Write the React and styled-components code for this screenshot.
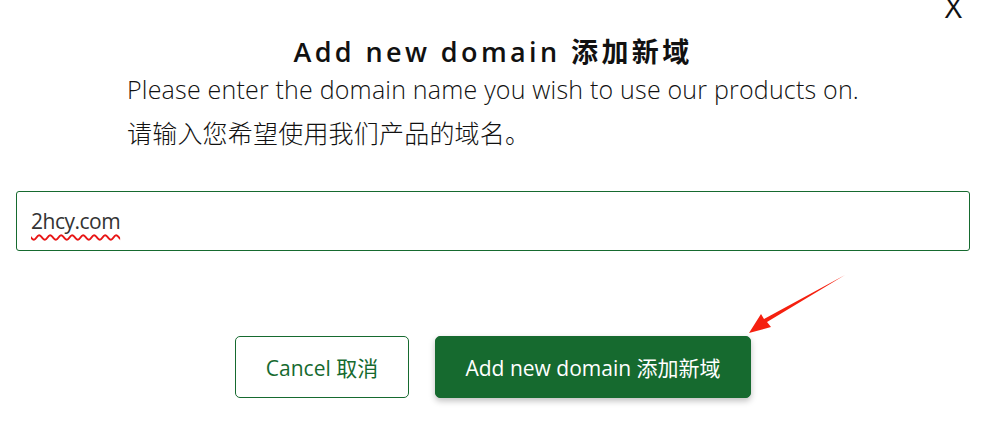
import React from 'react'
import styled, { createGlobalStyle } from 'styled-components'

const GREEN = '#166a2f'

const GlobalStyle = createGlobalStyle`
  html, body {
    margin: 0;
    padding: 0;
    background: #ffffff;
  }
  body {
    font-family: 'Open Sans', 'Noto Sans CJK SC', sans-serif;
    color: #111;
  }
`

const Page = styled.div`
  position: relative;
  width: 997px;
  height: 439px;
  overflow: hidden;
  box-sizing: border-box;
  padding: 33px 27px 0 16px;
`

const CloseButton = styled.button`
  position: absolute;
  top: -8px;
  right: 35px;
  border: none;
  background: none;
  padding: 0;
  font-family: 'Open Sans', sans-serif;
  font-size: 30px;
  font-weight: 400;
  line-height: 1;
  color: #111;
  cursor: pointer;
`

const Header = styled.div`
  display: flex;
  flex-direction: column;
  align-items: center;
`

const Title = styled.h2`
  margin: 0;
  font-family: 'Open Sans', 'Noto Sans CJK SC', sans-serif;
  font-size: 27px;
  font-weight: 600;
  letter-spacing: 3.4px;
  line-height: 38px;
  color: #111;
`

const Intro = styled.div`
  display: flex;
  flex-direction: column;
  gap: 8px;
`

const Line = styled.p`
  margin: 0;
  font-family: 'Open Sans', 'Noto Sans CJK SC', sans-serif;
  font-size: 25px;
  font-weight: 300;
  letter-spacing: 0.2px;
  line-height: 36px;
  color: #111;
`

const Field = styled.div`
  margin-top: 40px;
  height: 60px;
  box-sizing: border-box;
  border: 1px solid ${GREEN};
  border-radius: 3px;
  display: flex;
  align-items: center;
  padding: 0 14px;
`

const Value = styled.span`
  font-family: 'Open Sans', sans-serif;
  font-size: 21px;
  letter-spacing: -0.5px;
  color: #333;
  text-decoration: underline wavy #e81515;
  text-decoration-thickness: 1.5px;
  text-underline-offset: 5px;
`

const Actions = styled.div`
  display: flex;
  justify-content: center;
  gap: 26px;
  margin-top: 85px;
`

const Button = styled.button`
  height: 62px;
  box-sizing: border-box;
  border-radius: 5px;
  border: 1px solid ${GREEN};
  padding: 0;
  font-family: 'Open Sans', 'Noto Sans CJK SC', sans-serif;
  font-size: 21px;
  letter-spacing: 0;
  background: ${p => (p.$primary ? GREEN : '#fff')};
  color: ${p => (p.$primary ? '#fff' : GREEN)};
  box-shadow: ${p => (p.$primary ? '0 3px 6px rgba(0,0,0,0.25)' : 'none')};
  width: ${p => p.$width}px;
  cursor: pointer;
`

const Arrow = styled.svg`
  position: absolute;
  left: 745px;
  top: 270px;
  pointer-events: none;
`

const App = () => (
  <Page>
    <GlobalStyle />
    <CloseButton>X</CloseButton>
    <Header>
      <Title>Add new domain 添加新域</Title>
      <Intro>
        <Line>Please enter the domain name you wish to use our products on.</Line>
        <Line>请输入您希望使用我们产品的域名。</Line>
      </Intro>
    </Header>
    <Field>
      <Value>2hcy.com</Value>
    </Field>
    <Actions>
      <Button $width={174}>Cancel 取消</Button>
      <Button $primary $width={316}>Add new domain 添加新域</Button>
    </Actions>
    <Arrow width="110" height="70" viewBox="0 0 110 70">
      <path d="M100 5 L22 52 L26 57 L4 63 L16 44 L19 49 Z" fill="#f5200f" />
    </Arrow>
  </Page>
)

export default App
